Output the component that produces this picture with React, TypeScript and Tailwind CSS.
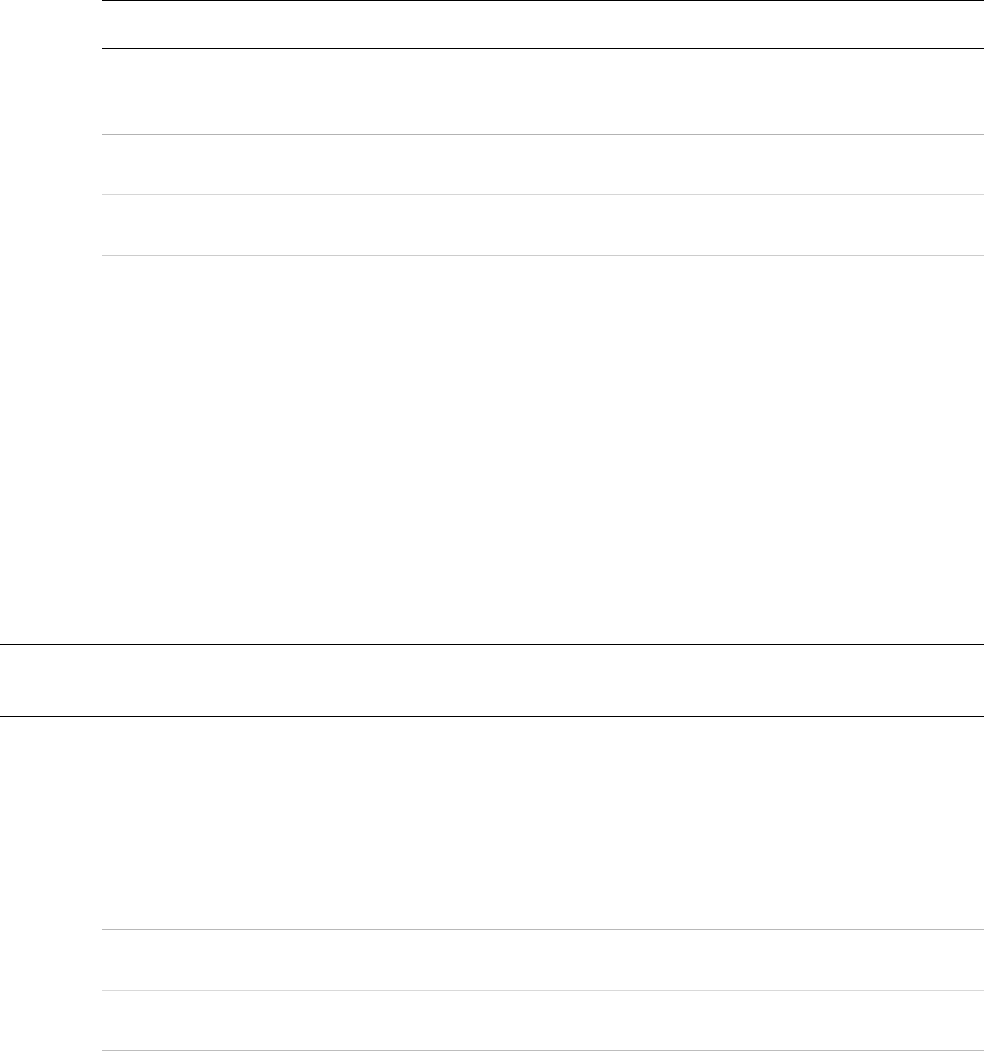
import React from 'react';

const Row: React.FC<{ h: string; line: string }> = ({ h, line }) => (
  <div className={`${h} border-b ${line}`} />
);

const App: React.FC = () => {
  return (
    <div className="min-h-[1051px] w-[984px] bg-white font-['Liberation_Sans',Arial,sans-serif]">
      {/* upper table */}
      <div className="ml-[102px] border-t border-black">
        <div className="h-[48px] border-b border-black" />
        <Row h="h-[86px]" line="border-[#b3b3b3]" />
        <Row h="h-[60px]" line="border-[#d6d6d6]" />
        <Row h="h-[61px]" line="border-[#cccccc]" />
      </div>

      <div className="h-[388px]" />

      {/* full-width band */}
      <div className="h-[73px] border-y border-black" />

      {/* lower table */}
      <div className="ml-[102px]">
        <div className="h-[213px] border-b border-[#b8b8b8]" />
        <Row h="h-[61px]" line="border-[#d9d9d9]" />
        <Row h="h-[60px]" line="border-[#bdbdbd]" />
      </div>
    </div>
  );
};

export default App;
